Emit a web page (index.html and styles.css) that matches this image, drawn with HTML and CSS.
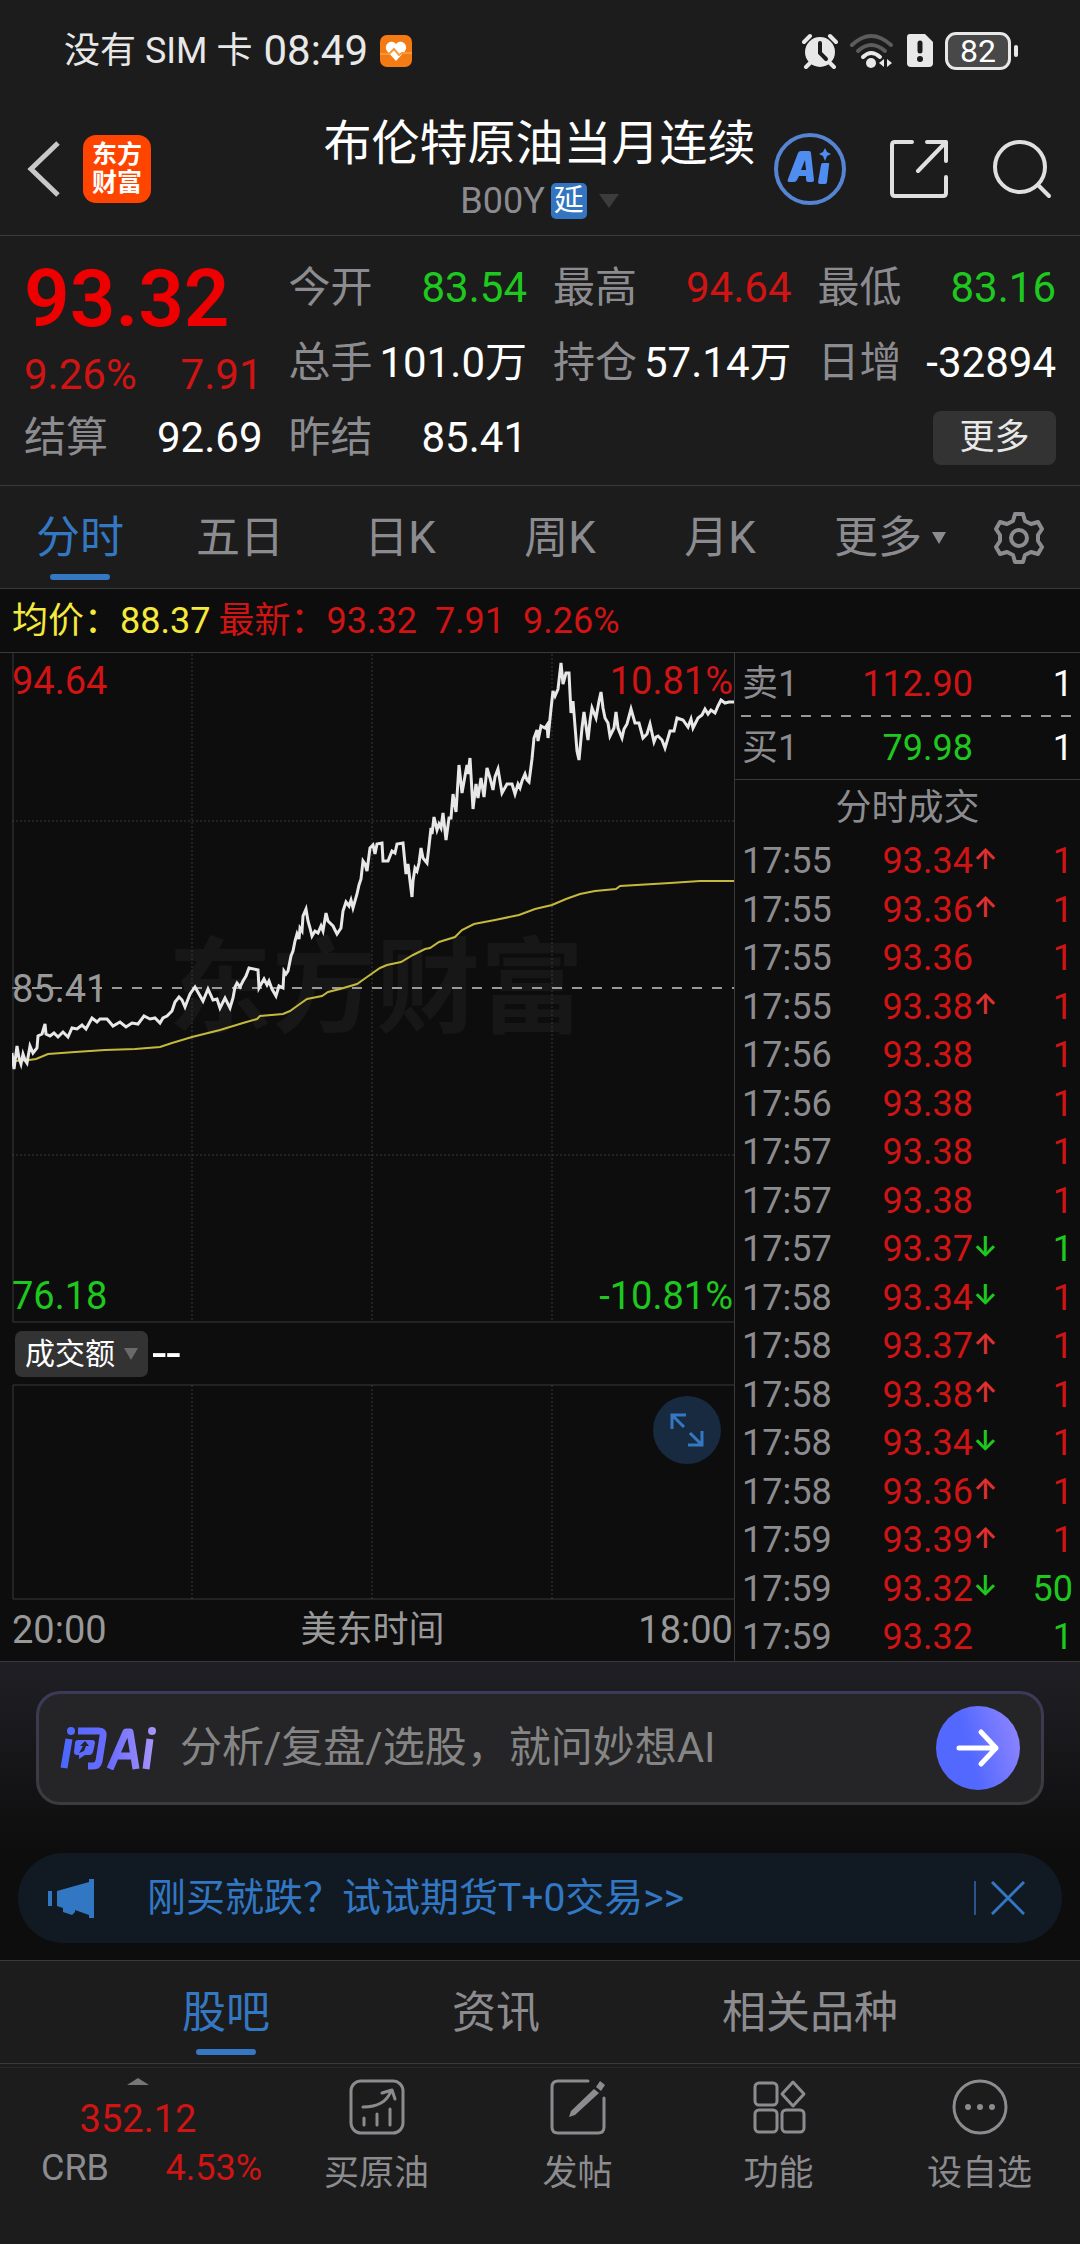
FILE: index.html
```html
<!DOCTYPE html>
<html lang="zh-CN">
<head>
    <meta charset="UTF-8">
    <meta name="viewport" content="width=device-width, initial-scale=1.0">
    <title>布伦特原油当月连续</title>
    <link rel="stylesheet" href="styles.css">
</head>
<body>
    <div class="status-bar">
        <div class="status-left">
            <span>没有 SIM 卡</span>
            <span class="clock">08:49</span>
            <svg class="health" width="32" height="32" viewBox="0 0 32 32">
                <rect width="32" height="32" rx="7" fill="#f47a14"/>
                <path d="M16 26 L7 16 A5.5 5.5 0 0 1 16 9 A5.5 5.5 0 0 1 25 16 Z" fill="#fff"/>
                <path d="M0 19 H9 L14 14 L19 20 L22 18 H32" fill="none" stroke="#f89a3c" stroke-width="2"/>
            </svg>
        </div>
        <div class="status-right">
            <svg width="36" height="36" viewBox="0 0 36 36">
                <circle cx="18" cy="19" r="15" fill="#e8e8e8"/>
                <path d="M2 9 L8 3 M28 3 L34 9 M8 30 L4 34 M28 30 L32 34" stroke="#e8e8e8" stroke-width="4" stroke-linecap="round"/>
                <path d="M18 10 V20 L24 26" fill="none" stroke="#1c1c1c" stroke-width="4" stroke-linecap="round"/>
            </svg>
            <svg width="46" height="36" viewBox="0 0 46 36" fill="none" stroke-width="4" stroke-linecap="round">
                <path d="M3 12 Q22 -6 42 12" stroke="#5c5c5c"/>
                <path d="M9 18 Q22 6 36 18" stroke="#5c5c5c"/>
                <path d="M14 24 Q22 16 31 24" stroke="#e8e8e8"/>
                <circle cx="22" cy="30" r="5" fill="#e8e8e8"/>
                <path d="M35 26 V34 L30 30 Z M38 26 V34 L43 30 Z" fill="#e8e8e8"/>
            </svg>
            <svg width="28" height="36" viewBox="0 0 28 36">
                <path d="M4 1 H19 L27 9 V30 Q27 34 23 34 H5 Q1 34 1 30 V4 Q1 1 4 1 Z" fill="#e8e8e8"/>
                <path d="M14 10 V18" stroke="#1c1c1c" stroke-width="5" stroke-linecap="round"/>
                <circle cx="14" cy="26" r="3" fill="#1c1c1c"/>
            </svg>
            <div class="battery">82</div>
        </div>
    </div>

    <header class="header">
        <div class="header-left">
            <button class="icon-btn" aria-label="返回">
                <svg width="34" height="58" viewBox="0 0 34 58" fill="none" stroke="#c8c8c8" stroke-width="5"><path d="M31 3 L4 29 L31 55"/></svg>
            </button>
            <a href="#" class="brand"><span>东方</span><span>财富</span></a>
        </div>
        <div class="header-title">
            <h1>布伦特原油当月连续</h1>
            <div class="code">B00Y<span class="delay">延</span><span class="tri tri-code"></span></div>
        </div>
        <div class="header-right">
            <button class="icon-btn ai-btn" aria-label="AI">
                <svg width="72" height="72" viewBox="0 0 72 72">
                    <circle cx="36" cy="36" r="34" fill="none" stroke="#5484d2" stroke-width="4"/>
                    <path fill="#4f8df0" fill-rule="evenodd" d="M27 18 H35 Q37 18 37 20 L40 47 Q40 49 38 49 H34 Q32 49 32 46 V43 H25 L23 47 Q22 49 20 49 H15 Q13 49 14 46 L24 20 Q25 18 27 18 Z M31 27 L27 37 H32 Z"/>
                    <path fill="#4f8df0" d="M49 30 H54 Q56 30 55 32 L53 49 Q53 51 51 51 H46 Q44 51 44 49 L47 32 Q47 30 49 30 Z M51 15 L53 19 L57 21 L53 23 L51 28 L49 23 L45 21 L49 19 Z"/>
                </svg>
            </button>
            <button class="icon-btn" aria-label="分享">
                <svg width="58" height="58" viewBox="0 0 58 58" fill="none" stroke="#e0e0e0" stroke-width="4" stroke-linecap="round" stroke-linejoin="round"><path d="M22 2 H5 Q2 2 2 5 V53 Q2 56 5 56 H53 Q56 56 56 53 V37 M37 2 H56 V21 M56 2 L28 31"/></svg>
            </button>
            <button class="icon-btn" aria-label="搜索">
                <svg width="60" height="60" viewBox="0 0 60 60" fill="none" stroke="#e0e0e0" stroke-width="4" stroke-linecap="round"><circle cx="28" cy="28" r="25"/><path d="M46 46 L57 57"/></svg>
            </button>
        </div>
    </header>

    <section class="quote">
        <div class="quote-main">
            <strong class="price">93.32</strong>
            <div class="change"><span>9.26%</span><span>7.91</span></div>
        </div>
        <div class="cell"><span>今开</span><b class="green">83.54</b></div>
        <div class="cell"><span>最高</span><b class="red">94.64</b></div>
        <div class="cell"><span>最低</span><b class="green">83.16</b></div>
        <div class="cell"><span>总手</span><b>101.0万</b></div>
        <div class="cell"><span>持仓</span><b>57.14万</b></div>
        <div class="cell"><span>日增</span><b>-32894</b></div>
        <div class="cell"><span>结算</span><b>92.69</b></div>
        <div class="cell"><span>昨结</span><b>85.41</b></div>
        <div class="cell cell-more"><button class="more-btn">更多</button></div>
    </section>

    <nav class="period-tabs">
        <button class="tab active">分时</button>
        <button class="tab">五日</button>
        <button class="tab">日K</button>
        <button class="tab">周K</button>
        <button class="tab">月K</button>
        <button class="tab">更多<span class="tri tri-tab"></span></button>
        <button class="tab tab-settings" aria-label="设置">
            <svg width="54" height="54" viewBox="0 0 54 54" fill="none" stroke="#8c8c90" stroke-width="4" stroke-linejoin="round">
                <path d="M23 3 H31 L33 10 L39 13 L46 11 L50 18 L46 24 V30 L50 36 L46 43 L39 41 L33 44 L31 51 H23 L21 44 L15 41 L8 43 L4 36 L8 30 V24 L4 18 L8 11 L15 13 L21 10 Z"/>
                <circle cx="27" cy="27" r="8"/>
            </svg>
        </button>
    </nav>

    <div class="legend">
        <span class="yellow">均价：88.37</span>
        <span class="red">最新：93.32</span>
        <span class="red legend-num">7.91</span>
        <span class="red legend-num">9.26%</span>
    </div>

    <main class="board">
        <div class="charts">
            <div class="price-chart">
                <svg viewBox="12 652 722 670">
                    <text class="watermark" x="376" y="1024" text-anchor="middle">东方财富</text>
                    <g class="grid-lines">
                        <path d="M192 653 V1321 M372 653 V1321 M552 653 V1321 M12 820 H734 M12 1154 H734"/>
                    </g>
                    <path class="mid-line" d="M12 987 H734"/>
                    <path class="frame" d="M734 1321 H13 V652"/>
                    <polyline class="avg" points="14,1060 29,1059 36,1058 48,1053 75,1051 105,1049 135,1048 160,1046 172,1042 192,1036 220,1029 243,1022 257,1018 260,1015 283,1013 290,1010 297,1005 307,998 322,995 328,991 340,988 357,983 367,976 380,967 387,964 401,961 413,954 425,948 430,947 439,941 455,936 462,929 474,923 495,919 519,914 535,908 552,904 566,898 580,893 595,890 616,888 620,885 670,882 700,880 734,880"/>
                    <polyline class="last" points="12,1052 14,1068 17,1045 19,1057 21,1063 23,1053 25,1059 27,1062 30,1045 33,1052 37,1047 38,1035 42,1033 45,1023 46,1033 50,1035 54,1032 58,1036 63,1031 66,1034 68,1036 72,1027 77,1028 82,1024 86,1028 92,1017 97,1021 100,1018 107,1018 113,1025 120,1021 126,1026 132,1022 138,1023 144,1015 150,1018 155,1017 160,1022 163,1017 167,1015 172,1010 175,1001 179,996 182,999 185,1006 190,993 195,986 199,993 203,1000 208,988 213,999 217,998 220,1007 225,997 230,1007 233,997 235,986 237,982 240,986 243,980 246,975 249,967 258,969 259,987 264,978 267,984 269,980 272,988 276,995 279,985 283,987 284,970 286,973 288,970 291,955 293,950 295,940 297,933 299,938 300,927 302,930 303,915 306,908 308,920 310,927 312,935 315,930 318,932 321,925 323,930 326,912 328,920 333,925 337,933 341,927 343,910 346,901 349,905 351,899 353,907 357,893 359,884 361,878 363,860 365,863 367,870 370,847 373,844 375,853 377,843 382,842 383,860 388,860 392,850 395,852 397,843 403,842 406,873 408,863 410,880 412,896 413,880 415,867 417,870 419,862 421,847 423,857 427,862 429,845 431,827 432,833 434,816 437,829 439,823 441,827 443,812 446,839 449,817 451,817 453,793 456,811 459,764 462,792 465,775 467,764 468,773 470,757 473,808 476,783 478,797 481,777 484,796 487,767 490,777 493,789 495,776 498,768 502,792 507,783 512,783 515,793 518,783 520,787 522,780 525,773 527,779 529,781 532,758 534,737 537,729 538,740 541,725 545,727 547,724 548,737 551,708 553,690 555,695 558,688 561,662 563,683 566,672 569,672 571,712 573,700 575,725 577,750 579,759 582,727 584,711 588,739 590,720 592,707 596,717 599,700 601,691 603,707 605,717 608,722 610,735 614,727 616,711 618,727 622,737 624,728 627,723 631,708 635,722 639,722 643,737 647,733 650,723 652,732 654,741 656,736 658,735 662,739 665,747 668,737 670,730 674,730 677,717 683,719 688,726 691,718 693,727 698,717 702,714 705,708 708,713 711,709 715,712 718,705 721,699 725,702 729,701 734,701"/>
                </svg>
                <div class="scale">
                    <div class="red"><span>94.64</span><span>10.81%</span></div>
                    <div class="grey"><span>85.41</span></div>
                    <div class="green"><span>76.18</span><span>-10.81%</span></div>
                </div>
            </div>
            <div class="indicator">
                <button class="indicator-btn">成交额<span class="tri tri-ind"></span></button>
                <span class="indicator-value">--</span>
            </div>
            <div class="volume-chart">
                <svg viewBox="12 1384 722 216">
                    <path class="grid-lines" d="M192 1385 V1599 M372 1385 V1599 M552 1385 V1599"/>
                    <path class="frame" d="M734 1385 H13 V1599 H734"/>
                </svg>
                <button class="expand-btn" aria-label="全屏">
                    <svg width="34" height="34" viewBox="0 0 34 34" fill="none" stroke="#3478c4" stroke-width="3"><path d="M2 16 V2 H16 M2 2 L14 14 M32 18 V32 H18 M32 32 L20 20"/></svg>
                </button>
            </div>
            <div class="time-axis"><span>20:00</span><span class="zone">美东时间</span><span>18:00</span></div>
        </div>

        <div class="side">
            <div class="level"><span>卖1</span><span class="red">112.90</span><b>1</b></div>
            <svg class="dash" height="2"><line x1="0" y1="1" x2="100%" y2="1"/></svg>
            <div class="level"><span>买1</span><span class="green">79.98</span><b>1</b></div>
            <table class="ticks">
                <caption>分时成交</caption>
                <tbody>
                    <tr><td>17:55</td><td class="up">93.34</td><td class="red">1</td></tr>
                    <tr><td>17:55</td><td class="up">93.36</td><td class="red">1</td></tr>
                    <tr><td>17:55</td><td>93.36</td><td class="red">1</td></tr>
                    <tr><td>17:55</td><td class="up">93.38</td><td class="red">1</td></tr>
                    <tr><td>17:56</td><td>93.38</td><td class="red">1</td></tr>
                    <tr><td>17:56</td><td>93.38</td><td class="red">1</td></tr>
                    <tr><td>17:57</td><td>93.38</td><td class="red">1</td></tr>
                    <tr><td>17:57</td><td>93.38</td><td class="red">1</td></tr>
                    <tr><td>17:57</td><td class="down">93.37</td><td class="green">1</td></tr>
                    <tr><td>17:58</td><td class="down">93.34</td><td class="red">1</td></tr>
                    <tr><td>17:58</td><td class="up">93.37</td><td class="red">1</td></tr>
                    <tr><td>17:58</td><td class="up">93.38</td><td class="red">1</td></tr>
                    <tr><td>17:58</td><td class="down">93.34</td><td class="red">1</td></tr>
                    <tr><td>17:58</td><td class="up">93.36</td><td class="red">1</td></tr>
                    <tr><td>17:59</td><td class="up">93.39</td><td class="red">1</td></tr>
                    <tr><td>17:59</td><td class="down">93.32</td><td class="green">50</td></tr>
                    <tr><td>17:59</td><td>93.32</td><td class="green">1</td></tr>
                </tbody>
            </table>
        </div>
    </main>

    <section class="ask">
        <form class="ask-box">
            <svg class="ask-logo" width="98" height="44" viewBox="0 0 98 44">
                <defs>
                    <linearGradient id="askFill" gradientUnits="userSpaceOnUse" x1="0" y1="0" x2="98" y2="0">
                        <stop offset="0" stop-color="#4a68ff"/>
                        <stop offset="0.5" stop-color="#6a6cff"/>
                        <stop offset="1" stop-color="#ab98f6"/>
                    </linearGradient>
                </defs>
                <g fill="none" stroke="url(#askFill)" stroke-width="7" stroke-linejoin="round">
                    <path d="M9 13 L4 42"/>
                    <path d="M18 5 H39 Q44 5 43 10 L39 35 Q38 40 33 40 H28"/>
                    <path d="M50 43 L66 6 H70 L76 43 M58 30 H73"/>
                    <path d="M90 13 L86 43"/>
                </g>
                <g fill="url(#askFill)">
                    <circle cx="11" cy="5" r="4"/>
                    <circle cx="92" cy="5" r="4"/>
                    <path fill-rule="evenodd" d="M18 14 H32 Q35 14 35 17 L33 26 Q32 29 29 29 H25 L19 33 V29 H17 Q14 29 14 26 L15 17 Q15 14 18 14 Z M25 15 L20 20 H23 L19 27 L24 25 L26 20 H29 Z"/>
                </g>
            </svg>
            <input type="text" class="ask-input" aria-label="提问" placeholder="分析/复盘/选股，就问妙想AI">
            <button type="button" class="send-btn" aria-label="发送">
                <svg width="44" height="40" viewBox="0 0 44 40" fill="none" stroke="#fff" stroke-width="5" stroke-linecap="round" stroke-linejoin="round"><path d="M3 20 H40 M25 4 L40 20 L25 36"/></svg>
            </button>
        </form>
    </section>

    <aside class="promo">
        <div class="banner">
            <svg width="46" height="40" viewBox="0 0 46 40" fill="#3277c4">
                <path d="M0 13 H4 V28 H0 Z M9 13 L41 4 V1 H46 V40 H41 V37 L27 32 V34 L24 37 L15 34 V30 L9 28 Z"/>
            </svg>
            <a href="#">刚买就跌？试试期货T+0交易&gt;&gt;</a>
            <button class="close-btn" aria-label="关闭">
                <svg width="34" height="34" viewBox="0 0 34 34" fill="none" stroke="#3277c4" stroke-width="3"><path d="M1 1 L33 33 M33 1 L1 33"/></svg>
            </button>
        </div>
    </aside>

    <nav class="info-tabs">
        <button class="tab active">股吧</button>
        <button class="tab">资讯</button>
        <button class="tab">相关品种</button>
    </nav>

    <footer class="toolbar">
        <div class="index">
            <span class="tri tri-up"></span>
            <div class="index-value">352.12</div>
            <div class="index-row"><span>CRB</span><span class="red">4.53%</span></div>
        </div>
        <button class="tool">
            <svg width="56" height="56" viewBox="0 0 56 56"><rect x="2" y="2" width="52" height="52" rx="10"/><path d="M14 28 Q36 28 42 12 M33 14 L43 11 L46 20 M15 39 V46 M28 35 V46 M41 30 V46"/></svg>
            买原油
        </button>
        <button class="tool">
            <svg width="56" height="56" viewBox="0 0 56 56"><path d="M38 2 H8 Q2 2 2 8 V48 Q2 54 8 54 H48 Q54 54 54 48 V19"/><path class="pen" d="M50 2 L55 6 L51 12 L46 8 Z M44 10 L49 14 L25 36 L19 38 L21 32 Z"/></svg>
            发帖
        </button>
        <button class="tool">
            <svg width="56" height="56" viewBox="0 0 56 56"><rect x="4" y="4" width="22" height="22" rx="4"/><rect x="4" y="31" width="22" height="22" rx="4"/><rect x="31" y="31" width="22" height="22" rx="4"/><path d="M42 3 L53 15 L42 27 L31 15 Z"/></svg>
            功能
        </button>
        <button class="tool">
            <svg width="56" height="56" viewBox="0 0 56 56"><circle cx="28" cy="28" r="26"/><path class="dots" d="M16 28 H16 M28 28 H28 M40 28 H40"/></svg>
            设自选
        </button>
    </footer>
</body>
</html>
```
FILE: styles.css
```css
* {
    box-sizing: border-box;
}

body {
    margin: 0;
    background: #1c1c1c;
    color: #8c8c90;
    font-family: Roboto, "Noto Sans CJK SC", sans-serif;
    font-size: 36px;
    line-height: 44px;
}

button {
    background: none;
    border: none;
    padding: 0;
    margin: 0;
    color: inherit;
    font: inherit;
    cursor: pointer;
}

a {
    color: inherit;
    text-decoration: none;
}

svg {
    display: block;
}

b {
    font-weight: 400;
    color: #fff;
}

.red {
    color: #d01414;
}

.green {
    color: #1ec81e;
}

.yellow {
    color: #f5ea3c;
}

.grey {
    color: #999;
}

/* small triangles */
.tri {
    display: inline-block;
    border-left: 10px solid transparent;
    border-right: 10px solid transparent;
    border-top: 14px solid #3c3c3c;
}

.tri-code {
    margin-left: 12px;
}

.tri-tab {
    border-width: 12px 7px 0;
    border-top-color: #8c8c90;
    margin-left: 10px;
}

.tri-ind {
    border-width: 12px 7px 0;
    border-top-color: #6a6a6a;
}

.tri-up {
    border-width: 0 11px 7px;
    border-bottom: 7px solid #77777a;
}

/* status bar */
.status-bar {
    display: flex;
    justify-content: space-between;
    align-items: center;
    height: 102px;
    padding: 0 69px 0 64px;
    color: #e8e8e8;
}

.status-left {
    display: flex;
    align-items: center;
}

.clock {
    font-size: 42px;
    margin-left: 11px;
}

.health {
    margin-left: 12px;
}

.status-right {
    display: flex;
    align-items: center;
    gap: 11px;
}

.battery {
    position: relative;
    width: 66px;
    height: 38px;
    border: 3px solid #e8e8e8;
    border-radius: 11px;
    background: #484848;
    color: #fff;
    font-size: 32px;
    line-height: 32px;
    text-align: center;
}

.battery::after {
    content: "";
    position: absolute;
    right: -10px;
    top: 10px;
    width: 4px;
    height: 12px;
    border-radius: 2px;
    background: #e8e8e8;
}

/* header */
.header {
    display: grid;
    grid-template-columns: 1fr auto 1fr;
    align-items: center;
    height: 134px;
    padding: 0 28px 0 27px;
    border-bottom: 1px solid #3a3a3a;
}

.header-left {
    display: flex;
    align-items: center;
    gap: 22px;
}

.brand {
    display: flex;
    flex-direction: column;
    justify-content: center;
    align-items: center;
    width: 68px;
    height: 68px;
    border-radius: 13px;
    background: #ff4400;
    color: #fff;
    font-size: 25px;
    font-weight: 700;
    line-height: 28px;
}

.header-title {
    text-align: center;
}

.header-title h1 {
    margin: 0;
    color: #fff;
    font-size: 48px;
    font-weight: 400;
    line-height: 64px;
}

.code {
    display: flex;
    justify-content: center;
    align-items: center;
    line-height: 50px;
}

.delay {
    width: 36px;
    height: 36px;
    margin-left: 6px;
    border-radius: 5px;
    background: #3375c0;
    color: #fff;
    font-size: 30px;
    line-height: 34px;
    text-align: center;
}

.header-right {
    display: flex;
    justify-content: flex-end;
    align-items: center;
    gap: 44px;
}

/* quote panel */
.quote {
    display: grid;
    grid-template-columns: repeat(4, 1fr);
    grid-auto-rows: 75px;
    column-gap: 26px;
    padding: 14px 24px 10px;
    border-bottom: 1px solid #3a3a3a;
    font-size: 42px;
}

.quote-main {
    grid-row: span 2;
    display: flex;
    flex-direction: column;
    color: #d01414;
}

.price {
    color: #ee0000;
    font-size: 80px;
    font-weight: 600;
    line-height: 98px;
}

.change {
    display: flex;
    justify-content: space-between;
    line-height: 54px;
}

.cell {
    display: flex;
    justify-content: space-between;
    align-items: center;
    white-space: nowrap;
}

.cell b.red {
    color: #d01414;
}

.cell b.green {
    color: #1ec81e;
}

.cell-more {
    grid-column: 4;
    justify-content: flex-end;
}

.more-btn {
    width: 123px;
    height: 54px;
    border-radius: 8px;
    background: #333;
    color: #e8e8e8;
    font-size: 35px;
}

/* tabs */
.tab {
    position: relative;
    display: flex;
    justify-content: center;
    align-items: center;
    height: 102px;
    padding-top: 2px;
    font-size: 44px;
}

.tab.active {
    color: #3478c4;
}

.tab.active::after {
    content: "";
    position: absolute;
    left: 50%;
    bottom: 8px;
    width: 60px;
    height: 6px;
    margin-left: -30px;
    border-radius: 3px;
    background: #3478c4;
}

.period-tabs {
    display: grid;
    grid-template-columns: repeat(5, 8fr) 9fr 5fr;
    border-bottom: 1px solid #3a3a3a;
}

.tab-settings {
    padding-right: 22px;
}

.legend {
    display: flex;
    height: 63px;
    padding: 0 12px;
    gap: 8px;
    background: #0d0d0d;
    line-height: 64px;
}

.legend-num {
    margin-left: 10px;
}

/* chart area */
.board {
    display: grid;
    grid-template-columns: 734fr 346fr;
    border-top: 1px solid #3a3a3a;
    border-bottom: 1px solid #3a3a3a;
    background: #0d0d0d;
}

.charts {
    padding-left: 12px;
}

.price-chart,
.volume-chart {
    position: relative;
}

.grid-lines {
    fill: none;
    stroke: #383838;
    stroke-width: 1;
    stroke-dasharray: 2 2;
}

.frame {
    fill: none;
    stroke: #3a3a3a;
    stroke-width: 1;
}

.mid-line {
    stroke: #999;
    stroke-width: 2;
    stroke-dasharray: 10 10;
}

.avg {
    fill: none;
    stroke: #c4b93c;
    stroke-width: 2;
}

.last {
    fill: none;
    stroke: #e8e8e8;
    stroke-width: 3;
}

.watermark {
    fill: #171717;
    font-size: 104px;
    font-weight: 700;
}

.scale {
    position: absolute;
    inset: 0;
    display: flex;
    flex-direction: column;
    justify-content: space-between;
    padding: 6px 1px 5px 0;
    font-size: 38px;
}

.scale div {
    display: flex;
    justify-content: space-between;
}

.indicator {
    display: flex;
    align-items: center;
    gap: 4px;
    height: 61px;
    color: #fff;
}

.indicator-btn {
    display: flex;
    align-items: center;
    gap: 9px;
    height: 46px;
    margin-left: 3px;
    padding: 0 10px;
    border-radius: 7px;
    background: #333;
    font-size: 30px;
}

.indicator-value {
    font-size: 52px;
}

.expand-btn {
    position: absolute;
    top: 12px;
    right: 13px;
    display: flex;
    justify-content: center;
    align-items: center;
    width: 68px;
    height: 68px;
    border-radius: 50%;
    background: #172a40;
}

.time-axis {
    display: flex;
    justify-content: space-between;
    padding-right: 1px;
    font-size: 38px;
    line-height: 60px;
    color: #999;
}

.zone {
    font-size: 36px;
}

/* order book and ticks */
.side {
    border-left: 1px solid #3a3a3a;
}

.level {
    display: grid;
    grid-template-columns: 96px 1fr 100px;
    padding: 0 7px;
    line-height: 62px;
    text-align: right;
}

.level span:first-child {
    text-align: left;
}

.dash {
    width: 100%;
    padding: 0 6px;
    stroke: #999;
    stroke-width: 2;
    stroke-dasharray: 10 10;
}

.ticks {
    width: 100%;
    border-spacing: 0;
    table-layout: fixed;
}

.ticks caption {
    border-top: 1px solid #3a3a3a;
    line-height: 57px;
}

.ticks tr {
    height: 48px;
}

.ticks tr:nth-child(even) {
    height: 49px;
}

.ticks td {
    padding: 0;
    text-align: right;
}

.ticks td:nth-child(1) {
    width: 104px;
    padding-left: 7px;
    text-align: left;
}

.ticks td:nth-child(2) {
    position: relative;
    color: #d01414;
}

.ticks td:nth-child(3) {
    width: 107px;
    padding-right: 7px;
}

/* direction arrow hangs outside the price column */
.up::after,
.down::after {
    position: absolute;
    left: 100%;
    top: 0;
    font-family: Inter, sans-serif;
    font-size: 28px;
    font-weight: 600;
}

.up::after {
    content: "↑";
    color: #e03030;
}

.down::after {
    content: "↓";
    color: #1ec81e;
}

/* ask box */
.ask {
    padding: 29px 36px 48px;
    background: linear-gradient(#201f25, #0d0d0d);
}

.ask-box {
    display: flex;
    align-items: center;
    height: 114px;
    padding: 0 21px;
    border: 3px solid transparent;
    border-radius: 24px;
    background: linear-gradient(#252527, #252527) padding-box, linear-gradient(#3b3a5a, #3d3b3b) border-box;
}

.ask-input {
    flex: 1;
    min-width: 0;
    margin-left: 22px;
    padding: 0;
    border: none;
    outline: none;
    background: transparent;
    color: #fff;
    font: inherit;
    font-size: 42px;
}

.ask-input::placeholder {
    color: #858585;
}

.send-btn {
    display: flex;
    justify-content: center;
    align-items: center;
    width: 84px;
    height: 84px;
    border-radius: 50%;
    background: linear-gradient(75deg, #5268ff 40%, #9488ff);
}

/* promo banner */
.promo {
    padding: 0 18px 17px;
    background: #0d0d0d;
}

.banner {
    display: flex;
    align-items: center;
    height: 90px;
    padding: 0 37px 0 30px;
    border-radius: 45px;
    background: #111a22;
    color: #3277c4;
    font-size: 39px;
}

.banner a {
    flex: 1;
    margin-left: 53px;
}

.close-btn {
    padding-left: 15px;
    border-left: 2px solid #28568c;
}

/* bottom */
.info-tabs {
    display: flex;
    justify-content: space-evenly;
    border-top: 1px solid #3a3a3a;
    border-bottom: 1px solid #3a3a3a;
}

.toolbar {
    display: grid;
    grid-template-columns: 276fr repeat(4, 201fr);
    margin-top: 3px;
    padding-bottom: 46px;
    border-top: 1px solid #282828;
}

.index {
    display: flex;
    flex-direction: column;
    align-items: center;
    padding-top: 10px;
}

.index-value {
    margin-top: 10px;
    color: #d01414;
    font-size: 38px;
    line-height: 48px;
}

.index-row {
    display: flex;
    justify-content: space-between;
    align-self: stretch;
    padding: 0 14px 0 41px;
    line-height: 50px;
}

.tool {
    display: flex;
    flex-direction: column;
    align-items: center;
    padding-top: 11px;
    font-size: 35px;
    line-height: 50px;
}

.tool svg {
    margin-bottom: 14px;
    fill: none;
    stroke: #8c8c90;
    stroke-width: 3;
    stroke-linecap: round;
    stroke-linejoin: round;
}

.tool .pen {
    fill: #8c8c90;
    stroke: none;
}

.tool .dots {
    stroke-width: 6;
}
```
